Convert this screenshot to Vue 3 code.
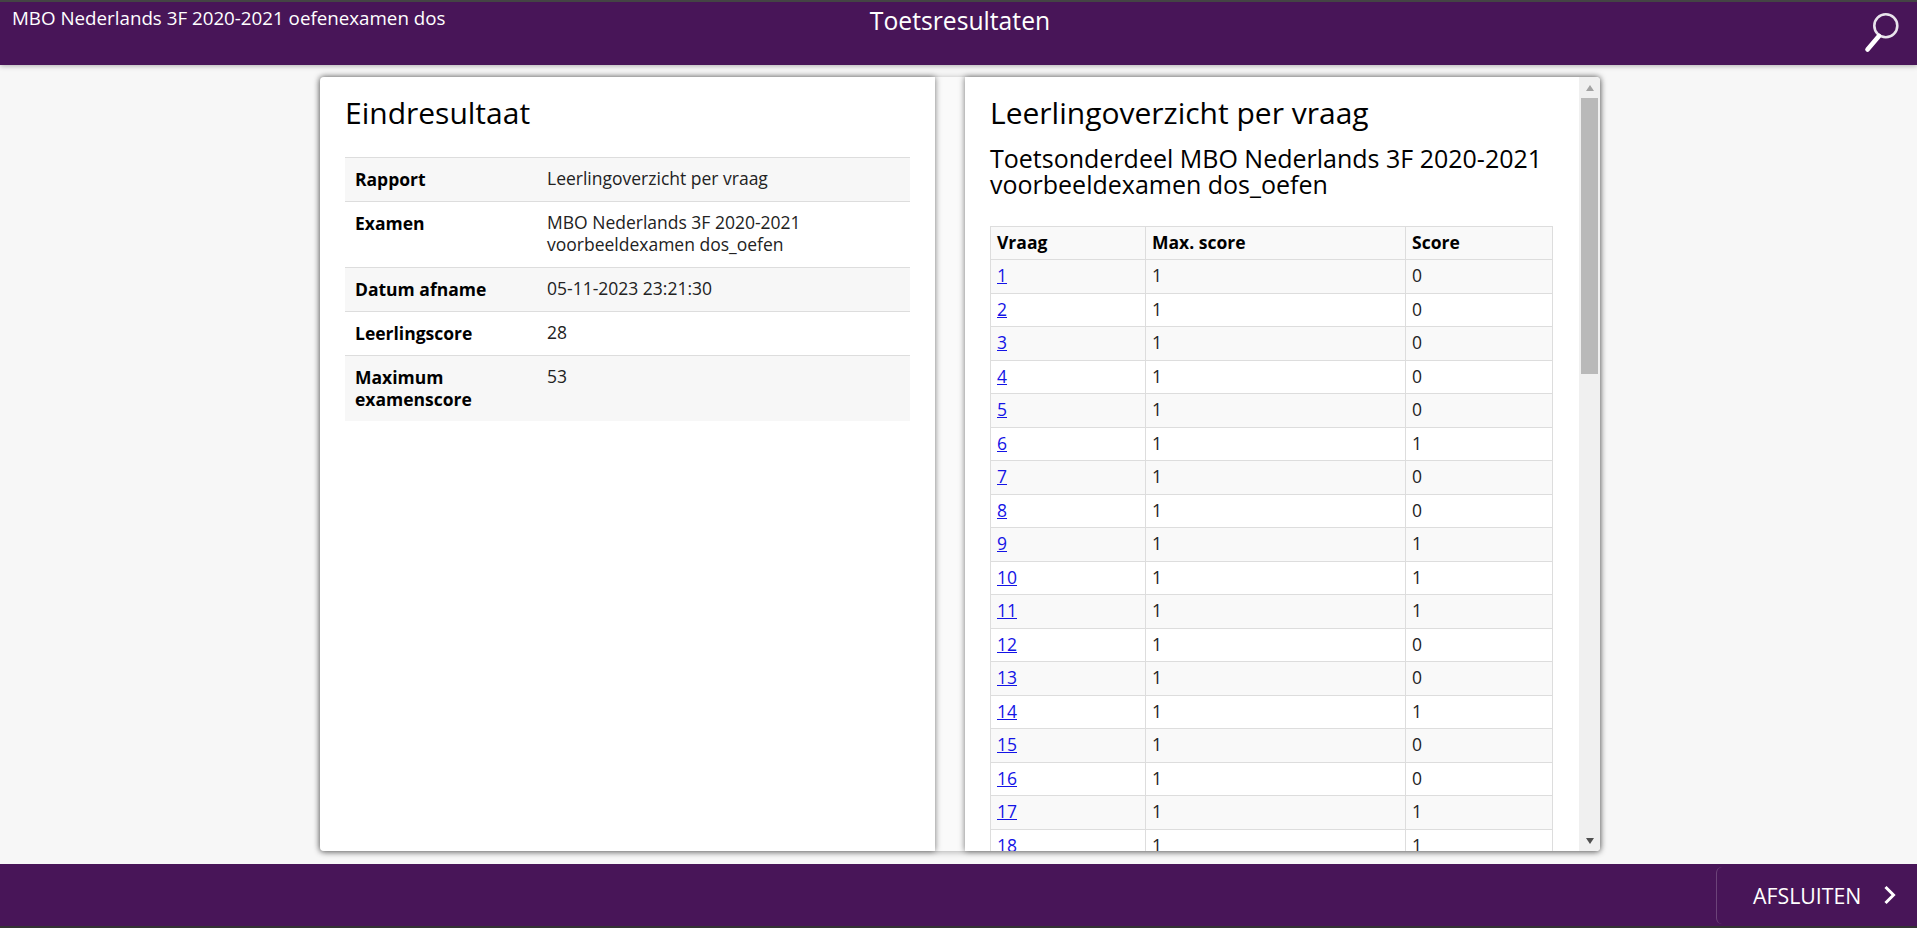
<template>
  <div class="page">
    <header class="top-bar">
      <div class="exam-name">MBO Nederlands 3F 2020-2021 oefenexamen dos</div>
      <div class="page-title">Toetsresultaten</div>
      <button type="button" class="search-btn" aria-label="Zoeken">
        <svg width="40" height="44" viewBox="0 0 40 44">
          <circle cx="24.8" cy="15.7" r="11.5" fill="none" stroke="#e9e4ec" stroke-width="2.6" />
          <line x1="18" y1="26" x2="6.5" y2="39.5" stroke="#fff" stroke-width="4.6" stroke-linecap="round" />
        </svg>
      </button>
    </header>

    <main class="content">
      <div class="panels">
        <section class="panel panel-left">
          <h2 class="result-title">Eindresultaat</h2>
          <table class="summary">
            <tbody>
              <tr v-for="row in summary" :key="row.label">
                <th>{{ row.label }}</th>
                <td>{{ row.value }}</td>
              </tr>
            </tbody>
          </table>
        </section>

        <section class="panel panel-right">
          <div class="scroll-area">
            <h2 class="result-title">Leerlingoverzicht per vraag</h2>
            <h3 class="part-title">Toetsonderdeel MBO Nederlands 3F 2020-2021 voorbeeldexamen dos_oefen</h3>
            <table class="questions">
              <thead>
                <tr>
                  <th class="col-q">Vraag</th>
                  <th class="col-max">Max. score</th>
                  <th>Score</th>
                </tr>
              </thead>
              <tbody>
                <tr v-for="(score, i) in scores" :key="i">
                  <td><a href="#">{{ i + 1 }}</a></td>
                  <td>1</td>
                  <td>{{ score }}</td>
                </tr>
              </tbody>
            </table>
          </div>
          <div class="scrollbar">
            <span class="arrow arrow-up"></span>
            <div class="thumb-track"><div class="thumb"></div></div>
            <span class="arrow arrow-down"></span>
          </div>
        </section>
      </div>
    </main>

    <footer class="bottom-bar">
      <button type="button" class="close-btn">
        AFSLUITEN
        <svg width="13" height="22" viewBox="0 0 13 22">
          <path d="M2.5 3 L10.5 11 L2.5 19" fill="none" stroke="#fff" stroke-width="3" />
        </svg>
      </button>
    </footer>
  </div>
</template>

<script setup>
const summary = [
  { label: 'Rapport', value: 'Leerlingoverzicht per vraag' },
  { label: 'Examen', value: 'MBO Nederlands 3F 2020-2021 voorbeeldexamen dos_oefen' },
  { label: 'Datum afname', value: '05-11-2023 23:21:30' },
  { label: 'Leerlingscore', value: '28' },
  { label: 'Maximum examenscore', value: '53' }
]

const scores = [0, 0, 0, 0, 0, 1, 0, 0, 1, 1, 1, 0, 0, 1, 0, 0, 1, 1]
</script>

<style>
html, body {
  margin: 0;
  height: 100%;
  overflow: hidden;
}
</style>

<style scoped>
.page {
  height: 928px;
  display: flex;
  flex-direction: column;
  background: #f7f7f7;
  font-family: "Open Sans", sans-serif;
  font-size: 17.5px;
  color: #000;
}

.top-bar {
  height: 63px;
  flex: none;
  position: relative;
  border-top: 2px solid #444;
  background: #481558;
  color: #fff;
  box-shadow: 0 1px 5px rgba(0, 0, 0, 0.3);
  display: flex;
  justify-content: center;
  z-index: 1;
}

.exam-name {
  position: absolute;
  left: 12px;
  top: 3px;
  font-size: 18.75px;
  line-height: 26px;
}

.page-title {
  font-size: 24.7px;
  line-height: 34px;
  margin: 2px 0 0 3px;
}

.search-btn {
  position: absolute;
  right: 16px;
  top: 8px;
  padding: 0;
  border: 0;
  background: none;
  line-height: 0;
}

.content {
  flex: 1;
  min-height: 0;
  display: flex;
  justify-content: center;
  padding: 12px 0 13px;
}

.panels {
  width: 1280px;
  margin-left: 3px;
  display: flex;
  justify-content: space-between;
  background: #fafafa;
  box-shadow: 0 1px 6px rgba(0, 0, 0, 0.3);
  border-radius: 4px;
}

.panel {
  background: #fff;
  overflow: hidden;
  display: flex;
  box-sizing: border-box;
  box-shadow: 0 0 6px rgba(0, 0, 0, 0.55);
}

.panel-left {
  width: 615px;
  flex-direction: column;
  padding: 18px 25px;
  border-radius: 4px 0 0 4px;
}

.panel-right {
  width: 635px;
  border-radius: 0 4px 4px 0;
}

.scroll-area {
  flex: 1;
  min-width: 0;
  overflow: hidden;
  padding: 18px 25px 0;
}

.result-title {
  margin: 0 0 25px;
  font-size: 30px;
  line-height: 36px;
  font-weight: 400;
}

.panel-right .result-title {
  margin-bottom: 14px;
}

.part-title {
  margin: 0 0 29px;
  font-size: 25px;
  line-height: 26px;
  font-weight: 400;
}

.summary {
  width: 100%;
  border-collapse: collapse;
  table-layout: fixed;
  margin-top: 1px;
}

.summary th,
.summary td {
  padding: 10px 10px 11px;
  line-height: 22px;
  text-align: left;
  vertical-align: top;
  border-top: 1px solid #ddd;
}

.summary th {
  width: 172px;
  font-weight: 700;
}

.summary td {
  color: #222;
  padding-top: 9px;
  padding-bottom: 12px;
}

.summary tr:nth-child(odd) {
  background: #f7f7f7;
}

.questions {
  width: 563px;
  border-collapse: collapse;
  table-layout: fixed;
}

.questions th,
.questions td {
  padding: 4px 6px 6px;
  line-height: 22.5px;
  text-align: left;
  border: 1px solid #ddd;
}

.questions th {
  line-height: 22px;
}

.questions td {
  color: #222;
}

.col-q {
  width: 142px;
}

.col-max {
  width: 247px;
}

.questions thead tr,
.questions tbody tr:nth-child(odd) {
  background: #f9f9f9;
}

.questions a {
  color: #1414e6;
}

.scrollbar {
  width: 21px;
  flex: none;
  background: #f0f0f0;
  display: flex;
  flex-direction: column;
  align-items: center;
}

.thumb-track {
  flex: 1;
  width: 100%;
}

.thumb {
  height: 276px;
  margin: 0 2px;
  background: #b9b9b9;
}

.arrow {
  width: 0;
  height: 0;
  flex: none;
  margin: 8px 0 7px;
  border-left: 4.5px solid transparent;
  border-right: 4.5px solid transparent;
}

.arrow-up {
  border-bottom: 6px solid #a3a3a3;
}

.arrow-down {
  border-top: 6px solid #505050;
}

.bottom-bar {
  height: 62px;
  flex: none;
  border-bottom: 2px solid #333;
  background: #481558;
  display: flex;
  justify-content: flex-end;
  align-items: center;
}

.close-btn {
  width: 201px;
  height: 57px;
  box-sizing: border-box;
  padding: 0 21px 0 36px;
  display: flex;
  align-items: center;
  justify-content: space-between;
  border: 0;
  border-left: 1px solid rgba(255, 255, 255, 0.2);
  border-radius: 6px 0 0 6px;
  background: none;
  color: #fff;
  font-family: inherit;
  font-size: 21.3px;
}
</style>
